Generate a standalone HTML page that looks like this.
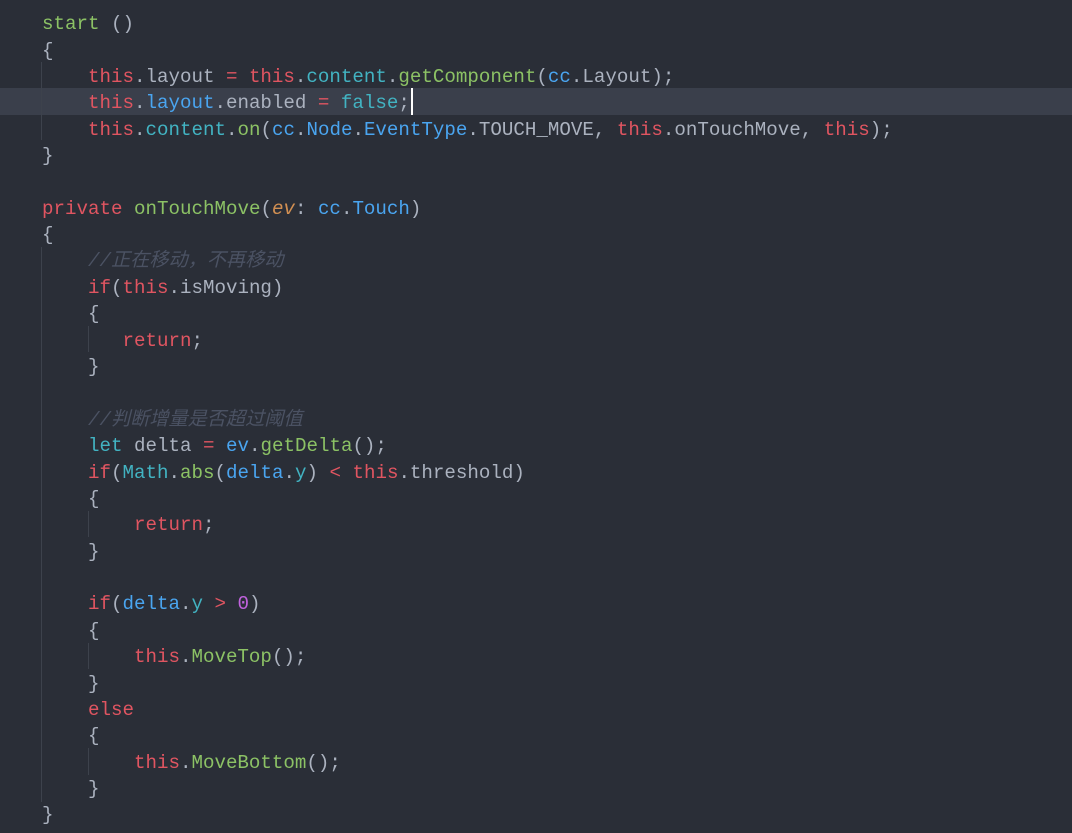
<!DOCTYPE html>
<html>
<head>
<meta charset="utf-8">
<style>
html,body{margin:0;padding:0;width:1072px;height:833px;overflow:hidden;background:#2a2e37;}
#e{position:relative;width:1072px;height:833px;overflow:hidden;background:#2a2e37;}
.l{position:absolute;left:42px;height:26px;line-height:26px;white-space:pre;font-family:"Liberation Mono","Noto Sans CJK SC",monospace;font-size:19.17px;color:#abb2bf;}
.r{color:#e05561}.g{color:#8cc265}.b{color:#4aa5f0}.t{color:#42b3c2}.p{color:#c162de}.o{color:#d18f52}.c{color:#4b5263;font-style:italic;font-family:"Liberation Mono","Noto Sans CJK SC",monospace}
.hl{position:absolute;left:0;top:88px;width:1072px;height:27px;background:#3a3f4b}
.cur{position:absolute;left:411px;top:88px;width:2px;height:27px;background:#fff}
.v{position:absolute;width:1px;background:#3d424c}
</style>
</head>
<body>
<div id="e">
<div class="hl"></div>
<div class="v" style="left:41px;top:62px;height:78px"></div>
<div class="v" style="left:41px;top:247px;height:555px"></div>
<div class="v" style="left:88px;top:326px;height:26px"></div>
<div class="v" style="left:88px;top:511px;height:26px"></div>
<div class="v" style="left:88px;top:643px;height:26px"></div>
<div class="v" style="left:88px;top:748px;height:27px"></div>
<div class="l" style="top:11px"><span class="g">start</span> ()</div>
<div class="l" style="top:38px">{</div>
<div class="l" style="top:64px">    <span class="r">this</span>.layout <span class="r">=</span> <span class="r">this</span>.<span class="t">content</span>.<span class="g">getComponent</span>(<span class="b">cc</span>.Layout);</div>
<div class="l" style="top:90px">    <span class="r">this</span>.<span class="b">layout</span>.enabled <span class="r">=</span> <span class="t">false</span>;</div>
<div class="l" style="top:117px">    <span class="r">this</span>.<span class="t">content</span>.<span class="g">on</span>(<span class="b">cc</span>.<span class="b">Node</span>.<span class="b">EventType</span>.TOUCH_MOVE, <span class="r">this</span>.onTouchMove, <span class="r">this</span>);</div>
<div class="l" style="top:143px">}</div>
<div class="l" style="top:196px"><span class="r">private</span> <span class="g">onTouchMove</span>(<span class="o" style="font-style:italic">ev</span>: <span class="b">cc</span>.<span class="b">Touch</span>)</div>
<div class="l" style="top:222px">{</div>
<div class="l" style="top:248px">    <span class="c">//正在移动，不再移动</span></div>
<div class="l" style="top:275px">    <span class="r">if</span>(<span class="r">this</span>.isMoving)</div>
<div class="l" style="top:301px">    {</div>
<div class="l" style="top:328px">       <span class="r">return</span>;</div>
<div class="l" style="top:354px">    }</div>
<div class="l" style="top:407px">    <span class="c">//判断增量是否超过阈值</span></div>
<div class="l" style="top:433px">    <span class="t">let</span> delta <span class="r">=</span> <span class="b">ev</span>.<span class="g">getDelta</span>();</div>
<div class="l" style="top:460px">    <span class="r">if</span>(<span class="t">Math</span>.<span class="g">abs</span>(<span class="b">delta</span>.<span class="t">y</span>) <span class="r">&lt;</span> <span class="r">this</span>.threshold)</div>
<div class="l" style="top:486px">    {</div>
<div class="l" style="top:512px">        <span class="r">return</span>;</div>
<div class="l" style="top:539px">    }</div>
<div class="l" style="top:591px">    <span class="r">if</span>(<span class="b">delta</span>.<span class="t">y</span> <span class="r">&gt;</span> <span class="p">0</span>)</div>
<div class="l" style="top:618px">    {</div>
<div class="l" style="top:644px">        <span class="r">this</span>.<span class="g">MoveTop</span>();</div>
<div class="l" style="top:671px">    }</div>
<div class="l" style="top:697px">    <span class="r">else</span></div>
<div class="l" style="top:723px">    {</div>
<div class="l" style="top:750px">        <span class="r">this</span>.<span class="g">MoveBottom</span>();</div>
<div class="l" style="top:776px">    }</div>
<div class="l" style="top:802px">}</div>
<div class="cur"></div>
</div>
</body>
</html>
